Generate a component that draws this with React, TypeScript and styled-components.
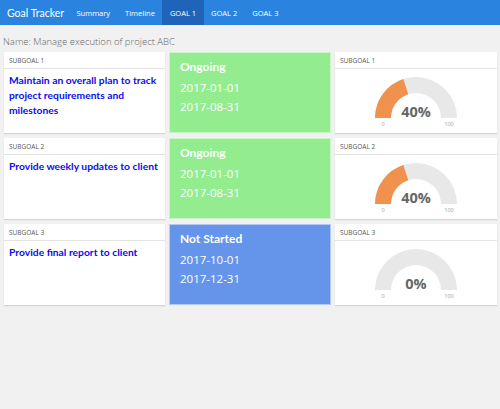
import React from "react";
import styled, { createGlobalStyle } from "styled-components";

const Global = createGlobalStyle`
  html, body { margin: 0; padding: 0; background: #f1f1f1; }
  body { font-family: "Open Sans", "Liberation Sans", sans-serif; }
`;

const Nav = styled.nav`
  display: flex;
  align-items: stretch;
  height: 25px;
  background: #2b83e0;
  color: #fff;
`;

const Brand = styled.div`
  display: flex;
  align-items: center;
  width: 62px;
  padding: 0 0 0 7px;
  font-family: "Lato", "Open Sans", sans-serif;
  font-size: 10.5px;
`;

const NavItem = styled.div<{ $active?: boolean }>`
  display: flex;
  align-items: center;
  padding: 0 7.5px;
  font-size: 7.5px;
  background: ${(p) => (p.$active ? "#1f64b8" : "transparent")};
`;

const Page = styled.div`
  padding: 10px 3px 0 4px;
`;

const NameLine = styled.div`
  font-size: 9.5px;
  color: #666;
  font-weight: 300;
  margin-bottom: 4px;
  margin-left: -1px;
`;

const Row = styled.div`
  display: grid;
  grid-template-columns: 161px 162px 162px;
  column-gap: 4px;
  height: 81px;
  margin-bottom: 5px;
`;

const Card = styled.div`
  background: #fff;
  box-shadow: 0 1px 1px rgba(0, 0, 0, 0.12);
  display: flex;
  flex-direction: column;
`;

const CardHeader = styled.div`
  height: 16px;
  display: flex;
  align-items: center;
  padding: 0 5px;
  font-size: 6.5px;
  color: #555;
  text-transform: uppercase;
  border-bottom: 1px solid #e3e3e3;
`;

const Title = styled.div`
  padding: 4px 5px 0 5px;
  font-family: "Lato", "Open Sans", sans-serif;
  font-weight: 700;
  font-size: 10.3px;
  line-height: 15px;
  color: #0c0cee;
`;

const ValueBox = styled.div<{ $color: string }>`
  background: ${(p) => p.$color};
  border: 1px solid rgba(255, 255, 255, 0.5);
  color: #fff;
  padding: 6px 10px;
  display: flex;
  flex-direction: column;
`;

const Status = styled.div`
  font-family: "Lato", "Open Sans", sans-serif;
  font-weight: 700;
  font-size: 12px;
  line-height: 16px;
  margin-bottom: 3px;
`;

const DateLine = styled.div`
  font-size: 11.5px;
  line-height: 19px;
`;

const GaugeBody = styled.div`
  flex: 1;
  display: flex;
  justify-content: center;
`;

function arc(cx: number, cy: number, ro: number, ri: number, a0: number, a1: number) {
  const p = (r: number, a: number) => {
    const rad = (a * Math.PI) / 180;
    return [cx + r * Math.cos(rad), cy - r * Math.sin(rad)].map((v) => v.toFixed(2)).join(" ");
  };
  return `M ${p(ro, a0)} A ${ro} ${ro} 0 0 1 ${p(ro, a1)} L ${p(ri, a1)} A ${ri} ${ri} 0 0 0 ${p(ri, a0)} Z`;
}

const Gauge: React.FC<{ value: number }> = ({ value }) => {
  const cx = 81;
  const cy = 49;
  const end = 180 - (180 * value) / 100;
  return (
    <svg width="162" height="64" viewBox="0 0 162 64">
      <path d={arc(cx, cy, 41, 25, 180, 0)} fill="#e8e8e8" />
      {value > 0 && <path d={arc(cx, cy, 41, 25, 180, end)} fill="#f0914e" />}
      <text x={cx} y={cy - 1} textAnchor="middle" fontFamily="Open Sans, sans-serif" fontWeight={700} fontSize="14.5" fill="#666">
        {value}%
      </text>
      <text x={cx - 33} y={cy + 8} textAnchor="middle" fontFamily="Open Sans, sans-serif" fontSize="5.5" fill="#999">
        0
      </text>
      <text x={cx + 33} y={cy + 8} textAnchor="middle" fontFamily="Open Sans, sans-serif" fontSize="5.5" fill="#999">
        100
      </text>
    </svg>
  );
};

const rows = [
  { n: 1, title: "Maintain an overall plan to track project requirements and milestones", status: "Ongoing", color: "#93ed8f", start: "2017-01-01", end: "2017-08-31", pct: 40 },
  { n: 2, title: "Provide weekly updates to client", status: "Ongoing", color: "#93ed8f", start: "2017-01-01", end: "2017-08-31", pct: 40 },
  { n: 3, title: "Provide final report to client", status: "Not Started", color: "#6595ea", start: "2017-10-01", end: "2017-12-31", pct: 0 },
];

export default function App() {
  return (
    <>
      <Global />
      <Nav>
        <Brand>Goal Tracker</Brand>
        <NavItem>Summary</NavItem>
        <NavItem>Timeline</NavItem>
        <NavItem $active>GOAL 1</NavItem>
        <NavItem>GOAL 2</NavItem>
        <NavItem>GOAL 3</NavItem>
      </Nav>
      <Page>
        <NameLine>Name: Manage execution of project ABC</NameLine>
        {rows.map((r) => (
          <Row key={r.n}>
            <Card>
              <CardHeader>Subgoal {r.n}</CardHeader>
              <Title>{r.title}</Title>
            </Card>
            <ValueBox $color={r.color}>
              <Status>{r.status}</Status>
              <DateLine>{r.start}</DateLine>
              <DateLine>{r.end}</DateLine>
            </ValueBox>
            <Card>
              <CardHeader>Subgoal {r.n}</CardHeader>
              <GaugeBody>
                <Gauge value={r.pct} />
              </GaugeBody>
            </Card>
          </Row>
        ))}
      </Page>
    </>
  );
}
